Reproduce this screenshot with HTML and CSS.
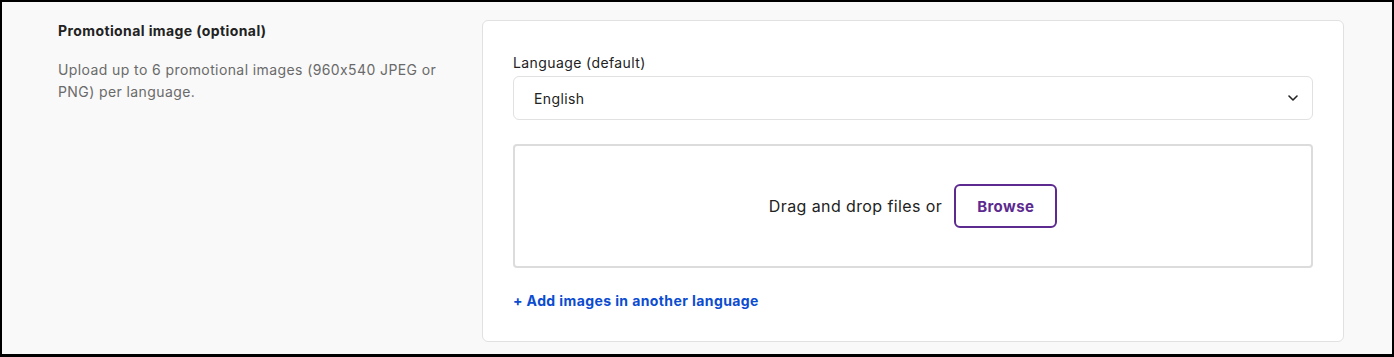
FILE: index.html
```html
<!DOCTYPE html>
<html lang="en">
<head>
    <meta charset="UTF-8">
    <meta name="viewport" content="width=device-width, initial-scale=1.0">
    <title>Promotional image</title>
    <link rel="stylesheet" href="styles.css">
</head>
<body>
    <div class="frame">
        <section class="field-row">
            <div class="field-info">
                <h3 class="field-title">Promotional image (optional)</h3>
                <p class="field-desc">Upload up to 6 promotional images (960x540 JPEG or PNG) per language.</p>
            </div>

            <div class="card">
                <label class="label" for="language">Language (default)</label>
                <div class="select">
                    <span id="language">English</span>
                    <svg class="chevron" width="10" height="6" viewBox="0 0 10 6">
                        <path d="M1 1l4 4 4-4" fill="none" stroke="#222" stroke-width="1.6" stroke-linecap="round" stroke-linejoin="round"/>
                    </svg>
                </div>

                <div class="dropzone">
                    <span class="drop-text">Drag and drop files or</span>
                    <button class="browse-button">Browse</button>
                </div>

                <a class="add-link" href="#">+ Add images in another language</a>
            </div>
        </section>
    </div>
</body>
</html>
```

FILE: styles.css
```css
body {
    margin: 0;
    padding: 0;
    font-family: Inter, "Liberation Sans", sans-serif;
    font-feature-settings: "calt" 0;
    letter-spacing: 0.4px;
    color: #222;
    background-color: #000;
}

.frame {
    box-sizing: border-box;
    height: 357px;
    border: 2px solid #000;
    border-bottom-width: 3px;
    background-color: #f9f9f9;
}

.field-row {
    display: grid;
    grid-template-columns: 400px 1fr;
    gap: 24px;
    padding: 18px 48px 0 56px;
}

.field-title {
    margin: 0;
    padding-top: 1px;
    font-size: 14px;
    line-height: 20px;
    font-weight: 700;
    color: #222;
}

.field-desc {
    margin: 18px 0 0;
    font-size: 14px;
    line-height: 22px;
    color: #6a6a6a;
}

.card {
    display: flex;
    flex-direction: column;
    align-items: flex-start;
    background-color: #fff;
    border: 1px solid #e1e1e1;
    border-radius: 6px;
    padding: 32px 30px 30px;
}

.label {
    font-size: 14px;
    line-height: 20px;
    margin-bottom: 3px;
}

.select {
    box-sizing: border-box;
    width: 100%;
    height: 44px;
    display: flex;
    align-items: center;
    justify-content: space-between;
    padding: 0 14px 0 20px;
    border: 1px solid #e1e1e1;
    border-radius: 6px;
    font-size: 14px;
}

.dropzone {
    box-sizing: border-box;
    width: 100%;
    height: 124px;
    margin-top: 24px;
    display: flex;
    align-items: center;
    justify-content: center;
    gap: 12px;
    border: 2px solid #dcdcdc;
    border-radius: 4px;
}

.drop-text {
    font-size: 16px;
}

.browse-button {
    box-sizing: border-box;
    height: 44px;
    width: 103px;
    background: #fff;
    border: 2px solid #5d2a90;
    border-radius: 6px;
    color: #5d2a90;
    font-family: inherit;
    font-feature-settings: inherit;
    letter-spacing: inherit;
    font-size: 15px;
    font-weight: 700;
    cursor: pointer;
}

.add-link {
    margin-top: 23px;
    font-size: 14px;
    line-height: 20px;
    font-weight: 700;
    color: #0b4cd0;
    text-decoration: none;
}
```
